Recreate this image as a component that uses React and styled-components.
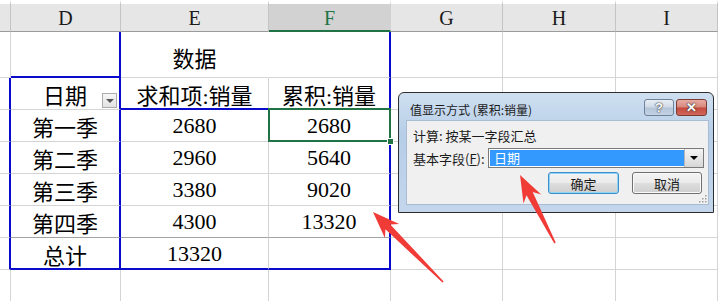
import React from 'react'
import styled, { createGlobalStyle } from 'styled-components'

/* ------------------------------ Constants --------------------------------- */
const GRID = '1px solid #d4d4d4'
const BLUE = '2px solid #0a0acd'
const DARK = '1px solid #a3a3a3'
const WHITE = '1px solid #fff'

const GlobalStyle = createGlobalStyle`
  html, body { margin: 0; padding: 0; background: #fff; overflow: hidden; }
`

/* ------------------------------- Sheet ------------------------------------ */
const Page = styled.div`
  position: relative;
  width: 718px;
  height: 301px;
  overflow: hidden;
  font-family: "Liberation Serif", "Noto Sans CJK SC", serif;
`

const Sheet = styled.div`
  display: grid;
  grid-template-columns: 11px 110px 148px 122px 112px 113px 102px;
  grid-template-rows: 32px 46px repeat(7, 32px);
`

const ColHead = styled.div`
  box-sizing: border-box;
  border-top: 4px solid #fff;
  background: ${p => (p.$active ? '#d2d2d2' : '#e6e6e6')};
  border-right: 1px solid ${p => (p.$active ? '#d2d2d2' : '#c4c4c4')};
  border-bottom: ${p => (p.$active ? '2px solid #217346' : '1px solid #9b9b9b')};
  color: ${p => (p.$active ? '#217346' : '#1a1a1a')};
  font-size: 20px;
  display: flex;
  align-items: center;
  justify-content: center;
  padding-top: 2px;
`

const Cell = styled.div`
  position: relative;
  box-sizing: border-box;
  border-right: ${p => p.$r || GRID};
  border-bottom: ${p => p.$b || GRID};
  display: flex;
  align-items: center;
  justify-content: center;
  font-size: 22px;
  color: #000;
  white-space: nowrap;
  padding-top: ${p => (p.$tall ? '5px' : '1px')};

  ${p => p.$sel && `
    &::after {
      content: '';
      position: absolute;
      left: -1px; top: -2px; right: -2px; bottom: -1px;
      border: 2px solid #217346;
    }
    &::before {
      content: '';
      position: absolute;
      right: -5px; bottom: -4px;
      width: 5px; height: 5px;
      background: #217346;
      border: 1px solid #fff;
      z-index: 1;
    }
  `}
`

const FilterBtn = styled.span`
  position: absolute;
  right: 2px;
  bottom: 1px;
  width: 15px;
  height: 15px;
  box-sizing: border-box;
  border: 1px solid #acacac;
  background: linear-gradient(#f7f7f7, #e2e2e2);
  display: flex;
  align-items: center;
  justify-content: center;

  &::after {
    content: '';
    border-left: 4px solid transparent;
    border-right: 4px solid transparent;
    border-top: 4px solid #555;
  }
`

/* ------------------------------- Dialog ----------------------------------- */
const Dialog = styled.div`
  position: absolute;
  left: 398px;
  top: 92px;
  width: 316px;
  height: 121px;
  box-sizing: border-box;
  border: 1px solid #2e2e2e;
  border-radius: 6px 6px 0 0;
  background: linear-gradient(#cfdff0, #b7cee8 35%, #c3d6ec);
  display: flex;
  flex-direction: column;
  padding: 0 4px 7px 7px;
  font-family: "Noto Sans CJK SC", "Liberation Sans", sans-serif;
  color: #1b1b1b;
`

const TitleBar = styled.div`
  height: 27px;
  box-sizing: border-box;
  padding-top: 6px;
  display: flex;
  align-items: flex-start;
`

const Title = styled.div`
  flex: 1;
  font-size: 12px;
  line-height: 17px;
  padding: 2px 0 0 4px;
  white-space: nowrap;
`

const CapBtn = styled.div`
  width: ${p => (p.$close ? '31px' : '30px')};
  height: 17px;
  margin-left: ${p => (p.$close ? '2px' : '0')};
  margin-right: ${p => (p.$close ? '2px' : '0')};
  box-sizing: border-box;
  border: 1px solid ${p => (p.$close ? '#7b3a32' : '#6e8299')};
  border-radius: 3px;
  background: ${p =>
    p.$close
      ? 'linear-gradient(#e8aca4, #d7877c 48%, #c4473b 52%, #d0685c)'
      : 'linear-gradient(#e9eef5, #cfd9e6 48%, #b5c5d9 52%, #c3d2e4)'};
  display: flex;
  align-items: center;
  justify-content: center;
  font-family: "Liberation Sans", sans-serif;
  font-weight: bold;
  font-size: 13px;
  color: #fff;
  text-shadow: 0 0 2px #333, 0 0 1px #222;
`

const Body = styled.div`
  position: relative;
  flex: 1;
  background: #f0f0f0;
  border: 1px solid #a9bcd3;
  padding: 6px 0 0 6px;
  font-size: 13px;
  display: flex;
  flex-direction: column;
`

const Line = styled.div`
  height: 18px;
  line-height: 18px;
  white-space: nowrap;
`

const FieldRow = styled.div`
  display: flex;
  align-items: center;
  margin-top: 3px;
  height: 20px;
`

const Label = styled.div`
  width: 75px;
  white-space: nowrap;
`

const Select = styled.div`
  flex: 1;
  margin-right: 4px;
  height: 20px;
  box-sizing: border-box;
  border: 1px solid #7a7a7a;
  background: #fff;
  display: flex;
  padding: 1px 0 1px 1px;
`

const SelValue = styled.div`
  flex: 1;
  background: #3399ff;
  color: #fff;
  line-height: 16px;
  padding-left: 4px;
`

const SelArrow = styled.div`
  width: 18px;
  margin-top: -1px;
  margin-bottom: -1px;
  border-left: 1px solid #b5b5b5;
  background: linear-gradient(#f4f4f4, #e6e6e6 50%, #d6d6d6);
  display: flex;
  align-items: center;
  justify-content: center;

  &::after {
    content: '';
    border-left: 4px solid transparent;
    border-right: 4px solid transparent;
    border-top: 4px solid #000;
  }
`

const Buttons = styled.div`
  display: flex;
  justify-content: flex-end;
  gap: 13px;
  margin-top: 4px;
  padding-right: 6px;
`

const Button = styled.div`
  width: ${p => (p.$focus ? '71px' : '70px')};
  height: 22px;
  box-sizing: border-box;
  border: 1px solid ${p => (p.$focus ? '#3c8fc8' : '#707070')};
  border-radius: 3px;
  box-shadow: ${p => (p.$focus ? 'inset 0 0 0 1px #8fd3f5' : 'inset 0 0 0 1px #fafafa')};
  background: linear-gradient(#f3f3f3, #ebebeb 48%, #dddddd 52%, #cfcfcf);
  display: flex;
  align-items: center;
  justify-content: center;
  font-size: 13px;
`

const Grip = styled.svg`
  position: absolute;
  right: 1px;
  bottom: 1px;
`

/* ------------------------------- Arrows ----------------------------------- */
const Overlay = styled.svg`
  position: absolute;
  left: 0;
  top: 0;
  pointer-events: none;
`

const arrowPoints = (tx, ty, sx, sy) => {
  const dx = tx - sx
  const dy = ty - sy
  const len = Math.hypot(dx, dy)
  const ux = dx / len
  const uy = dy / len
  const nx = -uy
  const ny = ux
  const at = (d, w) => `${(tx - ux * d + nx * w).toFixed(1)},${(ty - uy * d + ny * w).toFixed(1)}`
  return [at(0, 0), at(27, 10), at(21, 3.5), at(len, 0.8), at(len, -0.8), at(21, -3.5), at(27, -10)].join(' ')
}

/* -------------------------------- Data ------------------------------------ */
const rows = [
  { tall: true, cells: [{}, { r: BLUE, b: BLUE }, { t: '数据', r: WHITE }, { r: BLUE }] },
  { cells: [{ r: BLUE }, { t: '日期', r: BLUE, filter: true }, { t: '求和项:销量', b: BLUE }, { t: '累积:销量', r: BLUE }] },
  { cells: [{ r: BLUE }, { t: '第一季', r: BLUE }, { t: '2680' }, { t: '2680', r: BLUE, sel: true }] },
  { cells: [{ r: BLUE }, { t: '第二季', r: BLUE }, { t: '2960' }, { t: '5640', r: BLUE }] },
  { cells: [{ r: BLUE }, { t: '第三季', r: BLUE }, { t: '3380' }, { t: '9020', r: BLUE }] },
  { cells: [{ r: BLUE }, { t: '第四季', r: BLUE, b: DARK }, { t: '4300', b: DARK }, { t: '13320', r: BLUE, b: DARK }] },
  { cells: [{ r: BLUE }, { t: '总计', r: BLUE, b: BLUE }, { t: '13320', b: BLUE }, { r: BLUE, b: BLUE }] },
  { cells: [] },
]

const letters = ['D', 'E', 'F', 'G', 'H', 'I']

/* ------------------------------ Component --------------------------------- */
export default function App() {
  return (
    <Page>
      <GlobalStyle />
      <Sheet>
        <ColHead />
        {letters.map(l => (
          <ColHead key={l} $active={l === 'F'}>{l}</ColHead>
        ))}
        {rows.map((row, ri) =>
          Array.from({ length: 7 }).map((_, ci) => {
            const c = row.cells[ci] || {}
            return (
              <Cell key={`${ri}-${ci}`} $r={c.r} $b={c.b} $tall={row.tall} $sel={c.sel}>
                {c.t}
                {c.filter && <FilterBtn />}
              </Cell>
            )
          })
        )}
      </Sheet>

      <Dialog>
        <TitleBar>
          <Title>值显示方式 (累积:销量)</Title>
          <CapBtn>?</CapBtn>
          <CapBtn $close>✕</CapBtn>
        </TitleBar>
        <Body>
          <Line>计算: 按某一字段汇总</Line>
          <FieldRow>
            <Label>基本字段(<u>F</u>):</Label>
            <Select>
              <SelValue>日期</SelValue>
              <SelArrow />
            </Select>
          </FieldRow>
          <Buttons>
            <Button $focus>确定</Button>
            <Button>取消</Button>
          </Buttons>
          <Grip width="10" height="10" viewBox="0 0 10 10">
            {[[8, 2], [8, 5], [5, 5], [8, 8], [5, 8], [2, 8]].map(([x, y]) => (
              <rect key={`${x}${y}`} x={x} y={y} width="1.5" height="1.5" fill="#a0a0a0" />
            ))}
          </Grip>
        </Body>
      </Dialog>

      <Overlay width="718" height="301">
        <polygon points={arrowPoints(373, 212, 443, 282)} fill="#f13b37" />
        <polygon points={arrowPoints(520, 175, 555, 243)} fill="#f13b37" />
      </Overlay>
    </Page>
  )
}
